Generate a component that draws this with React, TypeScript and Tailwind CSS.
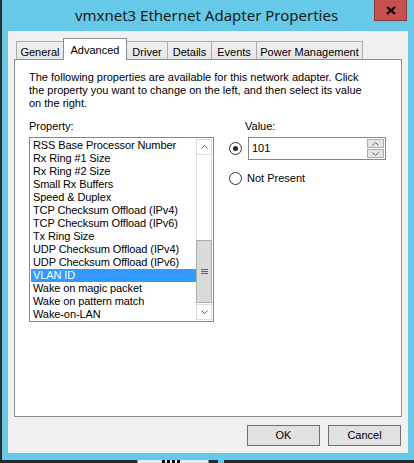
import React from "react";

const items = [
  "RSS Base Processor Number",
  "Rx Ring #1 Size",
  "Rx Ring #2 Size",
  "Small Rx Buffers",
  "Speed & Duplex",
  "TCP Checksum Offload (IPv4)",
  "TCP Checksum Offload (IPv6)",
  "Tx Ring Size",
  "UDP Checksum Offload (IPv4)",
  "UDP Checksum Offload (IPv6)",
  "VLAN ID",
  "Wake on magic packet",
  "Wake on pattern match",
  "Wake-on-LAN",
];

function Radio({ checked }: { checked?: boolean }) {
  return (
    <div className="w-[13px] h-[13px] rounded-full border border-[#333333] bg-white flex items-center justify-center shrink-0">
      {checked && <div className="w-[5px] h-[5px] rounded-full bg-[#222222]" />}
    </div>
  );
}

function Chevron({ up }: { up?: boolean }) {
  return (
    <svg width="7" height="4" viewBox="0 0 7 4">
      <path
        d={up ? "M0.5 3.5 L3.5 0.5 L6.5 3.5" : "M0.5 0.5 L3.5 3.5 L6.5 0.5"}
        fill="none"
        stroke="#606060"
        strokeWidth="1"
      />
    </svg>
  );
}

export default function App() {
  const tabs = [
    { label: "General", w: "w-[47px]", cls: "border-l" },
    { label: "Advanced", w: "w-[64px]", cls: "" },
    { label: "Driver", w: "w-[40px]", cls: "" },
    { label: "Details", w: "w-[44px]", cls: "border-l" },
    { label: "Events", w: "w-[45px]", cls: "border-l" },
    { label: "Power Management", w: "w-[107px]", cls: "border-l border-r" },
  ];
  return (
    <div
      className="w-[414px] h-[463px] bg-[#2b2b2b] overflow-hidden text-[11px] text-black"
      style={{ fontFamily: '"Liberation Sans", Arial, sans-serif' }}
    >
      <div className="ml-[2px] w-[412px] h-[460px] bg-[#66c9e8] flex flex-col">
        {/* Title bar */}
        <div className="h-[31px] relative flex items-center justify-center">
          <span
            className="text-[15px] text-[#1a1a1a] -mt-[1px] -ml-[3px]"
            style={{ fontFamily: '"Noto Sans", "Open Sans", sans-serif' }}
          >
            vmxnet3 Ethernet Adapter Properties
          </span>
          <div className="absolute right-[7px] top-0 w-[33px] h-[21px] bg-[#c75050] border border-[#8a3a35] border-t-0 flex items-center justify-center">
            <svg width="10" height="9" viewBox="0 0 10 9">
              <path d="M1 1 L9 8 M9 1 L1 8" stroke="#000" strokeWidth="2.2" />
            </svg>
          </div>
        </div>
        {/* Client area */}
        <div className="mx-[6px] h-[422px] bg-[#f0f0f0] flex flex-col">
          {/* Tabs */}
          <div className="h-[28px] flex items-end pl-[8px]">
            {tabs.map((t) =>
              t.label === "Advanced" ? (
                <div
                  key={t.label}
                  className={`${t.w} h-[22px] -mb-px relative z-10 bg-white border-l border-r border-t border-[#898c95] flex justify-center pt-[3px]`}
                >
                  {t.label}
                </div>
              ) : (
                <div
                  key={t.label}
                  className={`${t.w} h-[18px] bg-gradient-to-b from-[#f0f0f0] to-[#e5e5e5] border-t ${t.cls} border-[#acacac] flex justify-center pt-[2px]`}
                >
                  {t.label}
                </div>
              )
            )}
          </div>
          {/* Panel */}
          <div className="mx-[6px] h-[358px] bg-white border border-[#898c95] flex flex-col pl-[14px] pt-[11px]">
            <div className="leading-[13px]">
              The following properties are available for this network adapter. Click
              <br />
              the property you want to change on the left, and then select its value
              <br />
              on the right.
            </div>
            <div className="flex mt-[10px]">
              {/* Left column */}
              <div className="flex flex-col w-[185px]">
                <div className="leading-[13px] h-[13px]">Property:</div>
                <div className="mt-[4px] w-[185px] h-[185px] border border-[#828790] flex">
                  <div className="flex-1 flex flex-col pt-px pl-px">
                    {items.map((it) => (
                      <div
                        key={it}
                        className={`h-[13px] leading-[13px] pl-[2px] whitespace-nowrap tracking-[-0.1px] ${
                          it === "VLAN ID" ? "bg-[#3399ff] text-white" : ""
                        }`}
                      >
                        {it}
                      </div>
                    ))}
                  </div>
                  <div className="w-[17px] flex flex-col py-px pr-px">
                    <div className="h-[16px] bg-white border border-[#dcdcdc] flex items-center justify-center">
                      <Chevron up />
                    </div>
                    <div className="flex-1 border-x border-[#dcdcdc] bg-white" />
                    <div className="h-[63px] bg-[#dadada] border border-[#acacac] flex flex-col items-center justify-center gap-[1px]">
                      <div className="w-[7px] h-[1px] bg-[#606060]" />
                      <div className="w-[7px] h-[1px] bg-[#606060]" />
                      <div className="w-[7px] h-[1px] bg-[#606060]" />
                    </div>
                    <div className="h-[1px]" />
                    <div className="h-[16px] bg-white border border-[#dcdcdc] flex items-center justify-center">
                      <Chevron />
                    </div>
                  </div>
                </div>
              </div>
              {/* Right column */}
              <div className="ml-[15px] flex flex-col">
                <div className="leading-[13px] h-[13px] ml-[16px]">Value:</div>
                <div className="mt-[4px] flex items-center">
                  <Radio checked />
                  <div className="ml-[6px] w-[138px] h-[23px] border border-[#828790] flex bg-white">
                    <div className="flex-1 pl-[3px] flex items-center">101</div>
                    <div className="w-[18px] flex flex-col py-px pr-px gap-px">
                      <div className="flex-1 bg-[#e5e5e5] border border-[#acacac] flex items-center justify-center">
                        <Chevron up />
                      </div>
                      <div className="flex-1 bg-[#e5e5e5] border border-[#acacac] flex items-center justify-center">
                        <Chevron />
                      </div>
                    </div>
                  </div>
                </div>
                <div className="mt-[10px] flex items-center">
                  <Radio />
                  <span className="ml-[5px]">Not Present</span>
                </div>
              </div>
            </div>
          </div>
          {/* Buttons */}
          <div className="mt-[8px] flex justify-end pr-[7px] gap-[8px]">
            <div className="w-[73px] h-[21px] bg-[#e1e1e1] border border-[#3c7fb1] flex items-center justify-center">
              OK
            </div>
            <div className="w-[73px] h-[21px] bg-[#e1e1e1] border border-[#707070] flex items-center justify-center">
              Cancel
            </div>
          </div>
        </div>
      </div>
      {/* Window behind, peeking below */}
      <div className="h-[3px] flex">
        <div className="ml-[137px] w-[72px] h-[3px] bg-[#e8e8e8] border-x border-[#888888] flex gap-[2px] pl-[24px]">
          <div className="w-[3px] h-[3px] bg-black" />
          <div className="w-[3px] h-[3px] bg-black" />
          <div className="w-[3px] h-[3px] bg-black" />
          <div className="w-[3px] h-[3px] bg-black" />
        </div>
        <div className="ml-[9px] w-[6px] h-[3px] bg-[#66c9e8]" />
      </div>
    </div>
  );
}
